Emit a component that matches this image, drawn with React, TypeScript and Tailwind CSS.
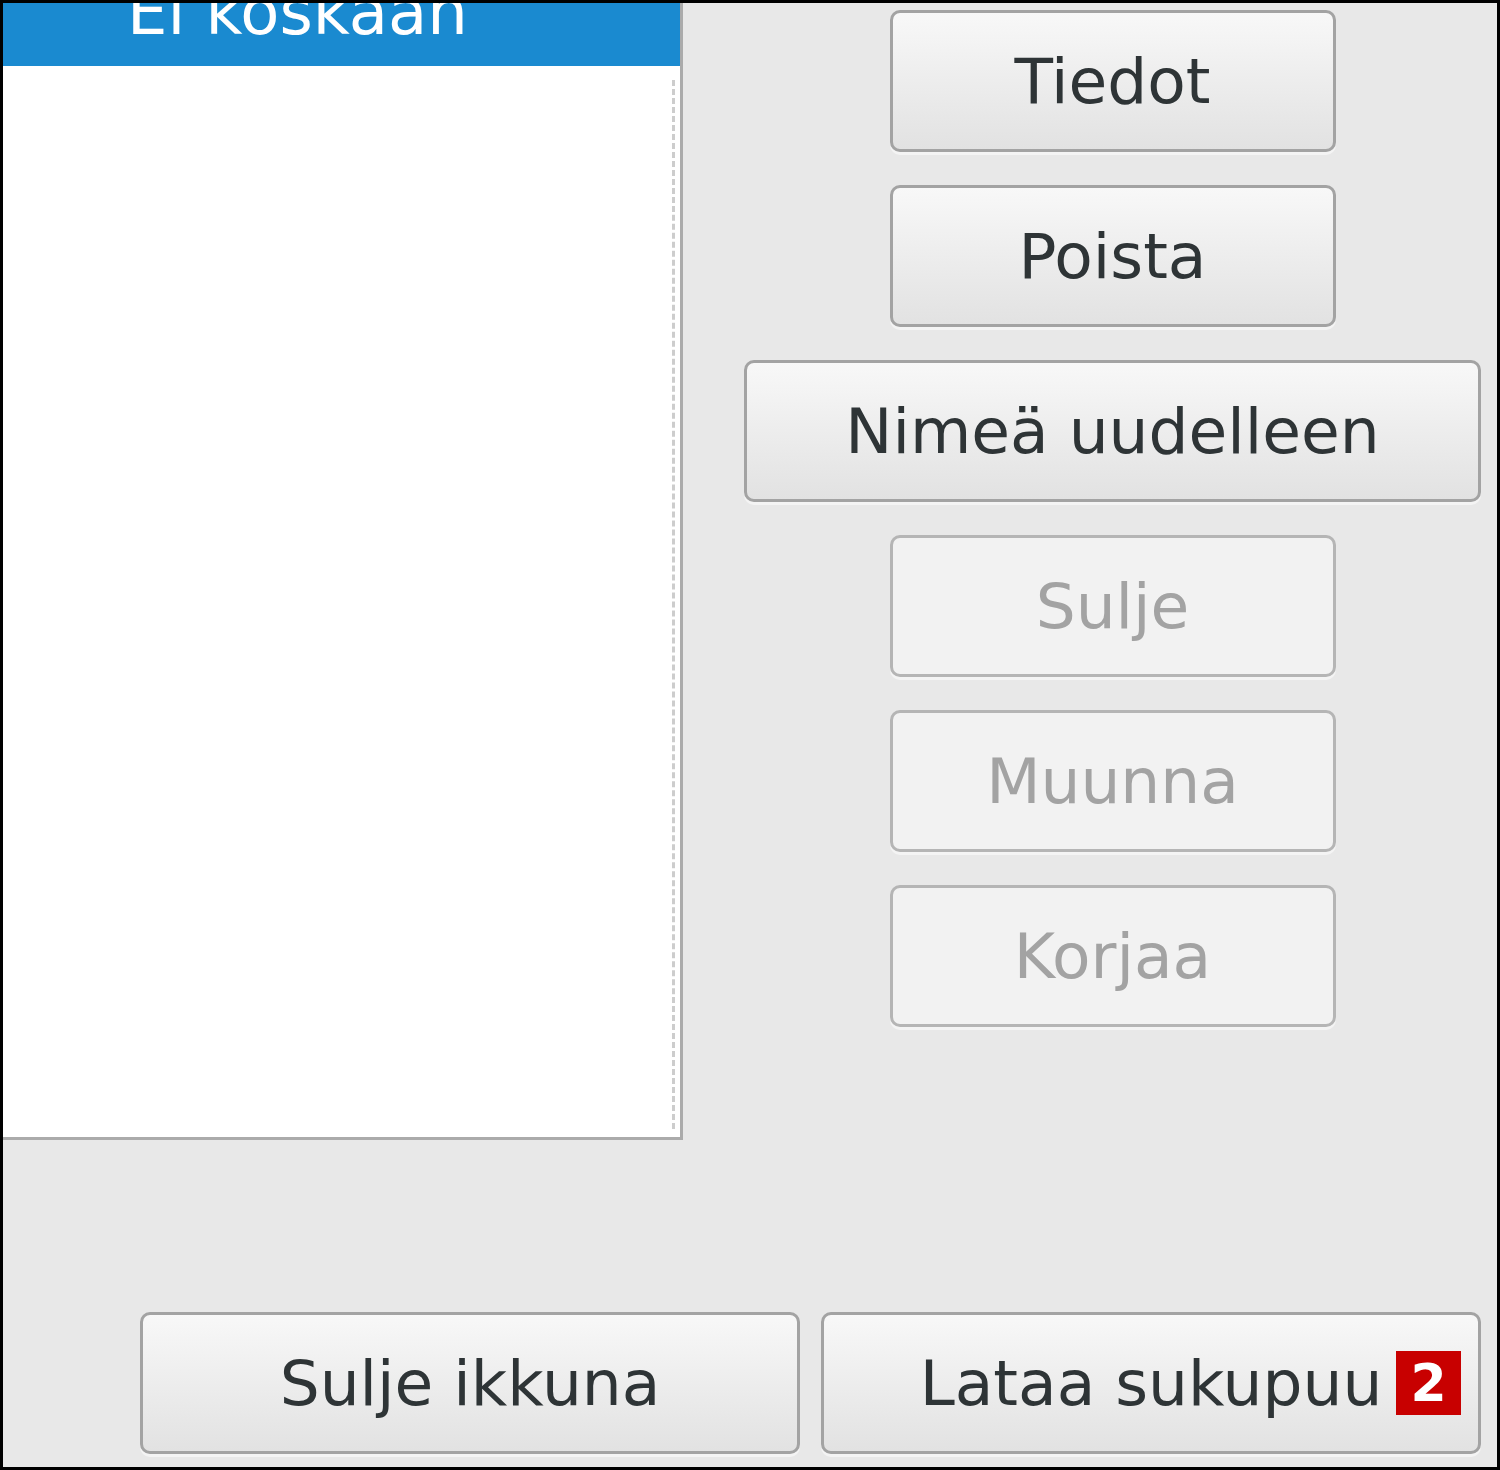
// Sukupuut-ikkunan alaosa: lista vasemmalla, toimintopainikkeet oikealla
import React from 'react';

type Btn = { label: string; wide?: boolean; disabled?: boolean };

const actions: Btn[] = [
  { label: 'Tiedot' },
  { label: 'Poista' },
  { label: 'Nimeä uudelleen', wide: true },
  { label: 'Sulje', disabled: true },
  { label: 'Muunna', disabled: true },
  { label: 'Korjaa', disabled: true },
];

function GtkButton({ label, disabled, className = '', children }: { label: string; disabled?: boolean; className?: string; children?: React.ReactNode }) {
  const look = disabled
    ? 'bg-[#f2f2f2] border-[#b5b5b5] text-[#a3a3a3]'
    : 'bg-gradient-to-b from-[#f8f8f8] to-[#e2e2e2] border-[#a3a3a3] text-[#2e3436]';
  return (
    <button
      disabled={disabled}
      className={`relative h-[142px] rounded-[10px] border-[3px] shadow-[0_3px_0_#f4f4f4] flex items-center justify-center text-[63px] leading-none ${look} ${className}`}
    >
      {label}
      {children}
    </button>
  );
}

export default function App() {
  return (
    <div
      className="w-[1500px] h-[1470px] border-[3px] border-black bg-[#e8e8e8] flex flex-col"
      style={{ fontFamily: '"DejaVu Sans", "Noto Sans", sans-serif' }}
    >
      <div className="flex">
        {/* Lista */}
        <div className="w-[680px] h-[1137px] bg-white border-r-[3px] border-b-[3px] border-[#ababab] flex flex-col">
          <div className="h-[63px] bg-[#1a8ad0] overflow-hidden pl-[124px]">
            <div className="text-[64px] leading-none text-white -mt-[23px]">Ei koskaan</div>
          </div>
          <div className="flex-1 pt-[14px] pb-[8px] pr-[5px]">
            <div className="h-full border-r-[3px] border-dashed border-[#cdcdcd]" />
          </div>
        </div>

        {/* Toiminnot */}
        <div className="ml-[61px] w-[737px] pt-[7px] flex flex-col items-center gap-[33px]">
          {actions.map(a => (
            <GtkButton
              key={a.label}
              label={a.label}
              disabled={a.disabled}
              className={a.wide ? 'w-full' : 'w-[446px]'}
            />
          ))}
        </div>
      </div>

      <div className="flex-1" />

      <div className="flex justify-end gap-[21px] pr-[16px] pb-[13px]">
        <GtkButton label="Sulje ikkuna" className="w-[660px]" />
        <GtkButton label="Lataa sukupuu" className="w-[660px]">
          <span className="absolute right-[17px] top-1/2 -translate-y-1/2 w-[65px] h-[64px] bg-[#c80000] text-white font-bold text-[52px] leading-none flex items-center justify-center">
            2
          </span>
        </GtkButton>
      </div>
    </div>
  );
}
